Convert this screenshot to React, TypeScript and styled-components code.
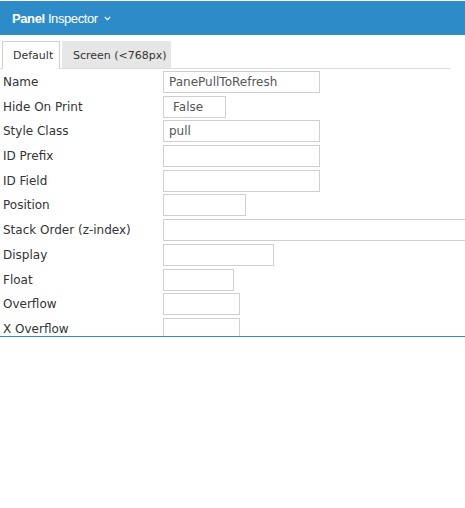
import React from "react";
import styled, { createGlobalStyle } from "styled-components";

const Global = createGlobalStyle`
  html, body { margin: 0; padding: 0; background: #fff; }
  body { font-family: "DejaVu Sans", Verdana, sans-serif; }
`;

const Page = styled.div`
  width: 465px;
  padding-top: 1px;
`;

const Header = styled.div`
  height: 34px;
  background: #2d8cc7;
  display: flex;
  align-items: center;
  padding-left: 12px;
  gap: 6px;
  color: #fff;
  font-family: "Liberation Sans", Arial, sans-serif;
  font-size: 13px;
  letter-spacing: -0.4px;
`;

const Title = styled.span`
  b { font-weight: 700; }
`;

const Body = styled.div`
  height: 301px;
  overflow: hidden;
  border-bottom: 1px solid #2d8cc7;
`;

const TabBar = styled.div`
  margin-top: 6px;
  width: 448px;
  padding-left: 2px;
  display: flex;
  gap: 2px;
  border-bottom: 1px solid #dcdcdc;
  height: 27px;
`;

const Tab = styled.div<{ $active?: boolean }>`
  box-sizing: border-box;
  height: ${(p) => (p.$active ? "28px" : "27px")};
  width: ${(p) => (p.$active ? "58px" : "109px")};
  padding-left: 10px;
  display: flex;
  align-items: center;
  font-size: 11px;
  color: #333;
  white-space: nowrap;
  background: ${(p) => (p.$active ? "#fff" : "#e6e6e6")};
  border: 1px solid ${(p) => (p.$active ? "#d0d0d0" : "#e6e6e6")};
  border-bottom: none;
`;

const Form = styled.div`
  display: grid;
  grid-template-columns: 160px auto;
  row-gap: 2.7px;
  padding: 2px 0 0 3px;
`;

const Label = styled.div`
  height: 22px;
  display: flex;
  align-items: center;
  font-size: 12px;
  color: #333;
  white-space: nowrap;
`;

const Field = styled.div<{ $w: number; $pad?: number }>`
  box-sizing: border-box;
  width: ${(p) => p.$w}px;
  height: 22px;
  border: 1px solid #cfcfcf;
  display: flex;
  align-items: center;
  padding-left: ${(p) => p.$pad ?? 5}px;
  font-size: 12px;
  color: #555;
  white-space: nowrap;
`;

const Chevron = () => (
  <svg width="7" height="5" viewBox="0 0 7 5" style={{ marginTop: 1 }}>
    <path d="M0.8 1 L3.5 3.7 L6.2 1" fill="none" stroke="#fff" strokeWidth="1.1" />
  </svg>
);

const rows: { label: string; w: number; value?: string; pad?: number }[] = [
  { label: "Name", w: 157, value: "PanePullToRefresh" },
  { label: "Hide On Print", w: 63, value: "False", pad: 9 },
  { label: "Style Class", w: 157, value: "pull" },
  { label: "ID Prefix", w: 157 },
  { label: "ID Field", w: 157 },
  { label: "Position", w: 83 },
  { label: "Stack Order (z-index)", w: 320 },
  { label: "Display", w: 111 },
  { label: "Float", w: 71 },
  { label: "Overflow", w: 77 },
  { label: "X Overflow", w: 77 },
];

export default function App() {
  return (
    <Page>
      <Global />
      <Header>
        <Title>
          <b>Panel</b> Inspector
        </Title>
        <Chevron />
      </Header>
      <Body>
        <TabBar>
          <Tab $active>Default</Tab>
          <Tab>Screen (&lt;768px)</Tab>
        </TabBar>
        <Form>
          {rows.map((r) => (
            <React.Fragment key={r.label}>
              <Label>{r.label}</Label>
              <Field $w={r.w} $pad={r.pad}>{r.value}</Field>
            </React.Fragment>
          ))}
        </Form>
      </Body>
    </Page>
  );
}
